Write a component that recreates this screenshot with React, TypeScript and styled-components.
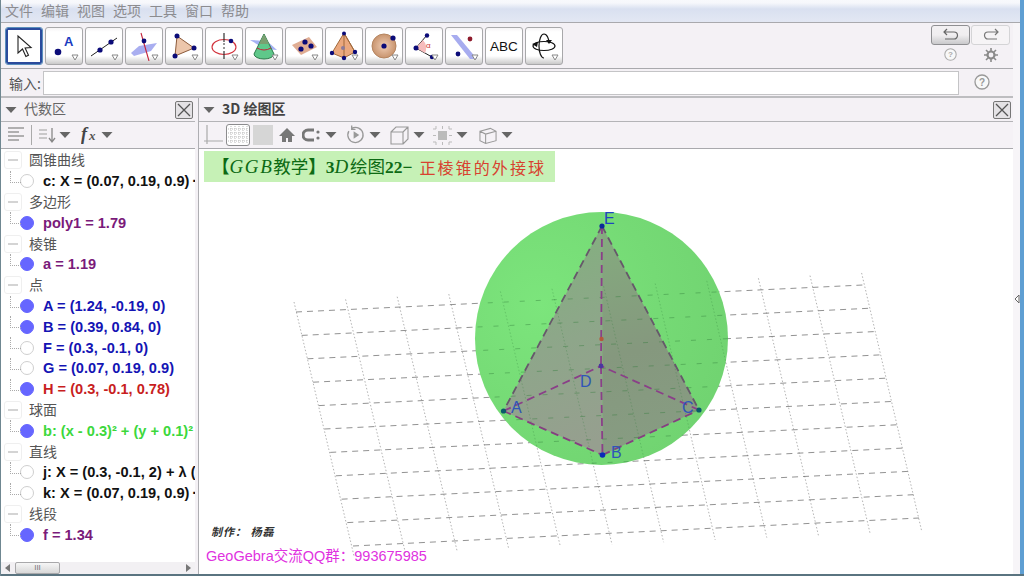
import React from 'react';
import styled, { createGlobalStyle } from 'styled-components';

const Global = createGlobalStyle`
  html, body { margin: 0; padding: 0; overflow: hidden; background: #fff; }
  * { box-sizing: border-box; }
  #root { width: 1024px; height: 576px; }
`;
const SANS = `"Liberation Sans", "Noto Sans CJK SC", sans-serif`;
const CJK = `"Noto Sans CJK SC", "Liberation Sans", sans-serif`;

const Shell = styled.div`
  width: 1024px; height: 576px; display: flex; flex-direction: column; background: #f4f1f5;
  font-family: ${SANS}; border-left: 1px solid #6f8791; overflow: hidden;
`;
const Top = styled.div`flex: 1; min-height: 0; display: flex;`;
const Main = styled.div`flex: 1; min-width: 0; display: flex; flex-direction: column;`;
const BottomEdge = styled.div`height: 2px; background: #5a7480; flex: none;`;
const BlueEdge = styled.div`width: 4px; flex: none; background: #5f9fd3;`;
const MenuBar = styled.div`
  height: 23px; flex: none; display: flex; gap: 8px; padding: 0 0 2px 4px; align-items: center;
  background: linear-gradient(#f8f9fc 0, #f6f7fb 3px, #d9e0f0 9px, #e2e7f3 21px);
  border-bottom: 1px solid #a9a9ad;
  font: 14px/20px ${CJK}; color: #8c8c90;
`;
const MenuItem = styled.span`width: 28px; white-space: nowrap;`;
const Work = styled.div`flex: 1; min-height: 0; display: flex;`;
const Content = styled.div`width: 1013px; flex: none; margin-right: -1px; display: flex; flex-direction: column; border-right: 1px solid #aeaeb2;`;
const SideStrip = styled.div`flex: 1; display: flex; align-items: center; justify-content: center; background: #f7f5f8;`;
const Toolbar = styled.div`
  height: 46px; flex: none; display: flex; align-items: flex-start; padding: 4px 0 0 4px; gap: 2px;
  border-bottom: 1px solid #a9a9ad; position: relative;
`;
const ToolBtn = styled.div<{ $active?: boolean }>`
  width: 38px; height: 38px; flex: none; border-radius: 3px; position: relative;
  border: 1px solid ${p => (p.$active ? '#5a8fbd' : '#a8a8aa')};
  background: ${p => (p.$active ? '#fff' : 'linear-gradient(#f6f4f6 0, #ffffff 4px, #ffffff 28px, #c9c9c9 36px)')};
  display: flex; align-items: center; justify-content: center;
  ${p => p.$active ? 'box-shadow: inset 0 0 0 2px #2b4b9c, inset 0 0 0 3px #ffffff;' : ''}
`;
const Corner = styled.svg`position: absolute; right: 3px; bottom: 3px;`;
const RightTools = styled.div`
  margin-left: auto; width: 79px; margin-right: 3px; margin-top: -2px;
  display: grid; grid-template-columns: 39px 39px; column-gap: 1px; row-gap: 3px; justify-items: center;
`;
const HistBtn = styled.div<{ $on?: boolean }>`
  width: 39px; height: 20px; border-radius: 3px;
  border: 1px solid ${p => (p.$on ? '#8f8f92' : '#d4d4d6')};
  background: ${p => (p.$on ? 'linear-gradient(#f2f0f2, #f0eef0 50%, #c9c9cb)' : '#f6f4f6')};
  display: flex; align-items: center; justify-content: center;
`;
const InputRow = styled.div`
  height: 29px; flex: none; display: flex; align-items: flex-start; padding: 2px 0 0 8px;
  border-bottom: 2px solid #bdbdc0; font: 14px/24px ${CJK}; color: #555;
`;
const InputLabel = styled.span`width: 34px; flex: none;`;
const InputBox = styled.div`width: 916px; height: 24px; background: #fff; border: 1px solid #c4c4c6; flex: none;`;
const HelpSlot = styled.div`flex: 1; display: flex; justify-content: center; padding: 3px 8px 0 0;`;
const Panels = styled.div`flex: 1; min-height: 0; display: flex;`;
const AlgebraPanel = styled.div`width: 194px; flex: none; display: flex; flex-direction: column;`;
const Divider = styled.div`width: 4px; flex: none; background: #f4f1f5; border-right: 1px solid #aeaeb2;`;
const GraphicsPanel = styled.div`flex: 1; min-width: 0; display: flex; flex-direction: column;`;
const TitleBar = styled.div`
  height: 24px; flex: none; display: flex; align-items: center; padding: 0 2px 0 4px;
  border-bottom: 1px solid #b4b4b7;
`;
const PanelTitle = styled.span<{ $strong?: boolean }>`
  margin: 0 0 3px 7px; font: ${p => (p.$strong ? 'bold' : 'normal')} 14px/20px ${CJK};
  color: ${p => (p.$strong ? '#444' : '#666')}; flex: 1; white-space: pre;
`;
const CloseBox = styled.div`
  width: 18px; height: 18px; flex: none; border: 1px solid #777; border-radius: 2px; background: #e4e2e5;
  display: flex; align-items: center; justify-content: center;
`;
const SubBar = styled.div`
  height: 27px; flex: none; display: flex; align-items: center; padding-left: 5px;
  border-bottom: 1px solid #a9a9ad; background: #f5f2f6;
`;
const Slot = styled.div<{ $w: number; $gap?: number; $pressed?: boolean }>`
  width: ${p => p.$w}px; height: 22px; flex: none; margin-right: ${p => p.$gap ?? 0}px;
  display: flex; align-items: center; justify-content: center;
  ${p => p.$pressed ? 'border: 1px solid #8c8c8e; border-radius: 3px; background: #fff;' : ''}
`;
const Sep = styled.div`width: 1px; height: 20px; background: #aaa; margin: 0 5px; flex: none;`;
const List = styled.div`flex: 1; min-height: 0; background: #fff; padding-top: 1px; overflow: hidden;`;
const GroupRow = styled.div`
  height: 20.8px; display: flex; align-items: center; padding-left: 3px; white-space: nowrap;
  font: 14px/20px ${CJK}; color: #555;
`;
const GroupText = styled.span`margin-top: -2px; margin-left: -1px;`;
const Minus = styled.div`
  width: 18px; height: 18px; border: 1px solid #efefef; border-radius: 3px; margin-right: 8px; flex: none;
  display: flex; align-items: center; justify-content: center;
  &::before { content: ''; width: 10px; height: 2px; background: #d4d4d4; }
`;
const ItemRow = styled.div`
  height: 20.8px; display: flex; align-items: center; white-space: nowrap; position: relative; padding-left: 19px;
  &::before { content: ''; position: absolute; left: 9px; top: 0; width: 10px; height: 11px;
    border-left: 1px dotted #aaa; border-bottom: 1px dotted #aaa; }
`;
const Marble = styled.div<{ $on?: boolean }>`
  width: 14px; height: 14px; border-radius: 50%; flex: none; margin-right: 9px;
  background: ${p => (p.$on ? '#6666ff' : '#fff')};
  border: 1px solid ${p => (p.$on ? '#6666ff' : '#cfcfcf')};
`;
const ItemText = styled.span<{ $c: string }>`font: bold 14.6px/18px ${SANS}; color: ${p => p.$c};`;
const ScrollBar = styled.div`
  height: 12px; flex: none; background: #f2f0f3; display: flex; align-items: center; padding: 0 4px; justify-content: space-between;
  position: relative;
`;
const Thumb = styled.div`
  position: absolute; left: 14px; top: 0; width: 45px; height: 12px; border: 1px solid #a8a8aa; border-radius: 2px;
  background: linear-gradient(#f6f6f6, #d8d8d8);
  display: flex; align-items: center; justify-content: center; font: 8px/10px ${SANS}; color: #777;
`;
const Canvas = styled.div`flex: 1; min-height: 0; position: relative; background: #fff; overflow: hidden;`;
const Scene = styled.svg`position: absolute; left: 0; top: 0;`;
const Banner = styled.div`
  position: absolute; left: 5px; top: 2px; width: 351px; height: 31px; background: #c6f1b6;
  display: flex; align-items: center; padding-left: 8px; white-space: nowrap;
  font: 17.5px/22px "Liberation Serif", ${CJK}; color: #0d6a14;
`;
const Ggb = styled.span`font-style: italic; font-size: 19px; letter-spacing: 1.6px;`;
const BoldSpan = styled.span`font-weight: bold;`;
const RedPart = styled.span`color: #d8412f; font-family: ${CJK}; font-size: 16px; line-height: 20px; letter-spacing: 2.1px; margin-left: 7px;`;
const Author = styled.div`
  position: absolute; left: 12px; top: 374px; font: italic bold 11px/16px ${CJK}; color: #333; letter-spacing: 1px; white-space: pre;
`;
const QQ = styled.div`
  position: absolute; left: 7px; top: 398px; font: 14.5px/18px ${SANS}; color: #df32df; white-space: nowrap;
`;

const Navy = '#0b0b78';
const Tri = () => <svg width="12" height="8" viewBox="0 0 12 8"><path d="M0.5 1h11L6 7z" fill="#666" /></svg>;

const Drop = () => (
  <Corner width="8" height="7" viewBox="0 0 8 7"><path d="M1 1h6L4 6z" fill="#fff" stroke="#888" /></Corner>
);
const S: React.FC<{ children: React.ReactNode }> = ({ children }) => (
  <svg width="30" height="30" viewBox="0 0 30 30">{children}</svg>
);
const tools: React.ReactNode[] = [
  <S><path d="M9 5v17l4.500-4 3.400 7.500 2.600-1.200-3.400-7.300 6-.5z" fill="#fff" stroke="#222" strokeWidth="1.1" /></S>,
  <S><circle cx="9" cy="21" r="3.300" fill={Navy} /><text x="15" y="15" fontFamily="Liberation Sans" fontWeight="bold" fontSize="13" fill="#1a3bc0">A</text></S>,
  <S><path d="M2 25L28 7" stroke="#222" strokeWidth="1" /><circle cx="11" cy="19" r="2.600" fill={Navy} /><circle cx="22" cy="11" r="2.600" fill={Navy} /></S>,
  <S><path d="M2 22L10 15 28 12 22 20 5 25z" fill="#a9aef0" /><path d="M12 2L20 30" stroke="#c3223a" strokeWidth="1.1" /><circle cx="15" cy="10" r="2.400" fill={Navy} /></S>,
  <S><path d="M8 5L25 17 6 25z" fill="#ecc6ab" stroke="#8c5a3a" strokeWidth="1" /><circle cx="8" cy="5" r="2.500" fill={Navy} /><circle cx="25" cy="17" r="2.500" fill={Navy} /><circle cx="6" cy="25" r="2.500" fill={Navy} /></S>,
  <S><ellipse cx="15" cy="16" rx="12" ry="7.500" fill="none" stroke="#d2323c" strokeWidth="1.1" /><path d="M15 2v9M15 20v8" stroke="#333" strokeWidth="1.2" /><path d="M15 12v7" stroke="#333" strokeDasharray="2 2" /><circle cx="22" cy="10" r="2.300" fill={Navy} /></S>,
  <S><path d="M1 9l17 1 10 9-12-1z" fill="#8f9df0" opacity=".8" /><path d="M15 3L5 23a10 5 0 0 0 20 0z" fill="#5fc88a" stroke="#2a7a4a" /><path d="M8 17q7 4 14 0" stroke="#c3223a" fill="none" /><path d="M15 3l-5 10h10z" fill="#7aa070" /></S>,
  <S><path d="M3 14L20 6 28 16 12 24z" fill="#e0ad93" /><circle cx="16" cy="11" r="2.600" fill={Navy} /><circle cx="22" cy="15" r="2.600" fill={Navy} /><circle cx="12" cy="18" r="2.600" fill={Navy} /></S>,
  <S><path d="M15 2L3 22l12 5 11-6z" fill="#eaa87e" stroke="#a0683a" /><path d="M15 2v25M15 2L26 21" stroke="#a0683a" /><circle cx="14" cy="17" r="2" fill="#8a7a9a" /><circle cx="15" cy="2.500" r="2" fill={Navy} /><circle cx="3" cy="22" r="2.200" fill={Navy} /><circle cx="15" cy="27" r="2.200" fill={Navy} /><circle cx="26" cy="21" r="2.200" fill={Navy} /></S>,
  <S><defs><radialGradient id="sph"><stop offset="0" stopColor="#f0cdb4" /><stop offset="1" stopColor="#c8946e" /></radialGradient></defs><circle cx="15" cy="15" r="12" fill="url(#sph)" stroke="#b58560" /><circle cx="15" cy="15" r="2.600" fill={Navy} /><circle cx="24" cy="7" r="2.600" fill={Navy} /></S>,
  <S><path d="M7 17L18 4M7 17l16 9" stroke="#222" /><path d="M7 17l7-8a12 12 0 0 1 2 13z" fill="#f7bcbc" /><circle cx="7" cy="17" r="2.500" fill={Navy} /><circle cx="18" cy="4.500" r="2.200" fill={Navy} /><circle cx="23" cy="26" r="2.200" fill={Navy} /><text x="17" y="17" fontFamily="Liberation Sans" fontSize="8" fill="#c33">α</text></S>,
  <S><path d="M2 4h6l20 24-7 0z" fill="#a7acef" /><circle cx="21" cy="8" r="2.400" fill="#8e1b2c" /><circle cx="9" cy="23" r="2.400" fill={Navy} /></S>,
  <S><text x="15" y="20" textAnchor="middle" fontFamily="Liberation Sans" fontSize="13.5" fill="#111">ABC</text></S>,
  <S><ellipse cx="15" cy="15" rx="11" ry="4.500" fill="none" stroke="#111" strokeWidth="1.2" /><path d="M15 27c-3 0-5-6-5-12s2-12 5-12 5 5 5 9" fill="none" stroke="#111" strokeWidth="1.2" /><path d="M17 9l3 4 3-4zM3 13l6-2-1 5z" fill="#111" /></S>,
];

const CloseIcon = () => <svg width="16" height="16" viewBox="0 0 16 16"><path d="M2 2l12 12M14 2L2 14" stroke="#555" strokeWidth="1.3" /></svg>;
const Help = ({ size, c }: { size: number; c: string }) => (
  <svg width={size} height={size} viewBox="0 0 16 16">
    <circle cx="8" cy="8" r="7" fill="#f8f8f8" stroke={c} strokeWidth="1.3" />
    <text x="8" y="11.500" textAnchor="middle" fontFamily="Liberation Sans" fontSize="10" fontWeight="bold" fill={c}>?</text>
  </svg>
);

type Item = { t: string; c: string; on?: boolean };
const BLACK = '#111', PUR = '#7a1a7a', BLUE = '#1414b4', RED = '#c81e1e', GRN = '#3cd83c';
const tree: { g: string; items: Item[] }[] = [
  { g: '圆锥曲线', items: [{ t: 'c: X = (0.07, 0.19, 0.9)\u2009·', c: BLACK }] },
  { g: '多边形', items: [{ t: 'poly1 = 1.79', c: PUR, on: true }] },
  { g: '棱锥', items: [{ t: 'a = 1.19', c: PUR, on: true }] },
  { g: '点', items: [
    { t: 'A = (1.24, -0.19, 0)', c: BLUE, on: true },
    { t: 'B = (0.39, 0.84, 0)', c: BLUE, on: true },
    { t: 'F = (0.3, -0.1, 0)', c: BLUE },
    { t: 'G = (0.07, 0.19, 0.9)', c: BLUE },
    { t: 'H = (0.3, -0.1, 0.78)', c: RED, on: true },
  ] },
  { g: '球面', items: [{ t: 'b: (x - 0.3)² + (y + 0.1)²', c: GRN, on: true }] },
  { g: '直线', items: [
    { t: 'j: X = (0.3, -0.1, 2) + λ (', c: BLACK },
    { t: 'k: X = (0.07, 0.19, 0.9)\u2009·', c: BLACK },
  ] },
  { g: '线段', items: [{ t: 'f = 1.34', c: PUR, on: true }] },
];

// grid, in canvas coordinates (canvas origin is page 199,149)
const OX = 199, OY = 149;
const hLines = Array.from({ length: 11 }, (_, i) => ({
  x1: 296 + i * 5.7 - OX, y1: 312 + i * 23.4 - OY,
  x2: 863 + i * 5.6 - OX, y2: 285 + i * 23.3 - OY,
}));
const vLines = Array.from({ length: 12 }, (_, j) => ({
  x1: 294 + j * 51.6 - OX, y1: 302 - j * 2.64 - OY,
  x2: 354 + j * 51.6 - OX, y2: 556 - j * 2.3 - OY,
}));
const P = (x: number, y: number) => `${x - OX},${y - OY}`;
const pt = { E: [602, 226], A: [503.5, 411], B: [602.5, 455], C: [699, 410], D: [601, 366], H: [601.5, 339] } as Record<string, [number, number]>;
const L = (a: string, b: string) => ({ x1: pt[a][0] - OX, y1: pt[a][1] - OY, x2: pt[b][0] - OX, y2: pt[b][1] - OY });

const GridH = ({ stroke, op, dash }: { stroke: string; op: number; dash: string }) => (
  <g stroke={stroke} fill="none">
    {hLines.map((l, i) => <line key={i} {...l} strokeWidth="1" strokeDasharray={dash} strokeOpacity={op} />)}
    {vLines.map((l, i) => <line key={i} {...l} strokeWidth="1" strokeDasharray="1.5 2" strokeOpacity={op * 0.7} />)}
  </g>
);

const Label = styled.text`font: 16px ${SANS}; fill: #2f55b8;`;

const DrawScene = () => (
  <Scene width="814" height="425" viewBox="0 0 814 425">
    <defs>
      <radialGradient id="ball" gradientUnits="userSpaceOnUse" cx={540 - OX} cy={305 - OY} r="215">
        <stop offset="0" stopColor="#7ce57c" />
        <stop offset=".55" stopColor="#75da75" />
        <stop offset="1" stopColor="#70d270" />
      </radialGradient>
      <linearGradient id="faceL" gradientUnits="userSpaceOnUse" x1={520 - OX} y1={250 - OY} x2={600 - OX} y2={440 - OY}>
        <stop offset="0" stopColor="#83b07f" />
        <stop offset=".5" stopColor="#8ea68a" />
        <stop offset="1" stopColor="#969f8f" />
      </linearGradient>
      <linearGradient id="faceR" gradientUnits="userSpaceOnUse" x1={610 - OX} y1={240 - OY} x2={660 - OX} y2={440 - OY}>
        <stop offset="0" stopColor="#84aa7e" />
        <stop offset=".55" stopColor="#85987e" />
        <stop offset="1" stopColor="#879c82" />
      </linearGradient>
      <clipPath id="ballClip"><circle cx={601.5 - OX} cy={338.5 - OY} r="126.5" /></clipPath>
    </defs>
    <GridH stroke="#777" op={0.8} dash="6 5" />
    <circle cx={601.5 - OX} cy={338.5 - OY} r="126.5" fill="url(#ball)" />
    <polygon points={`${P(...pt.E)} ${P(...pt.A)} ${P(...pt.B)}`} fill="url(#faceL)" />
    <polygon points={`${P(...pt.E)} ${P(...pt.B)} ${P(...pt.C)}`} fill="url(#faceR)" />
    <g clipPath="url(#ballClip)"><GridH stroke="#2f7a3a" op={0.4} dash="5 11" /></g>
    <g fill="none" strokeWidth="1.8" strokeDasharray="8 5">
      <line {...L('E', 'A')} stroke="#66586a" />
      <line {...L('E', 'C')} stroke="#66586a" />
      <line {...L('A', 'B')} stroke="#853f80" />
      <line {...L('B', 'C')} stroke="#853f80" />
      <line {...L('A', 'D')} stroke="#8a3f88" />
      <line {...L('C', 'D')} stroke="#8a3f88" />
      <line {...L('E', 'D')} stroke="#8a3f88" />
      <line {...L('D', 'B')} stroke="#8a3f88" />
    </g>
    <circle cx={pt.E[0] - OX} cy={pt.E[1] - OY} r="2.6" fill="#0b2a9a" />
    <circle cx={pt.A[0] - OX} cy={pt.A[1] - OY} r="2.6" fill="#0a5a6a" />
    <circle cx={pt.C[0] - OX} cy={pt.C[1] - OY} r="2.6" fill="#0a5a6a" />
    <circle cx={pt.B[0] - OX} cy={pt.B[1] - OY} r="2.8" fill="#0b2ab8" />
    <circle cx={pt.D[0] - OX} cy={pt.D[1] - OY} r="2.4" fill="#4a35a0" />
    <circle cx={pt.H[0] - OX} cy={pt.H[1] - OY} r="2.2" fill="#b5583a" />
    <Label x={604 - OX} y={224 - OY} style={{ fill: '#1f45c0' }}>E</Label>
    <Label x={511 - OX} y={413 - OY}>A</Label>
    <Label x={580 - OX} y={387 - OY}>D</Label>
    <Label x={682 - OX} y={413 - OY}>C</Label>
    <Label x={611 - OX} y={458 - OY}>B</Label>
  </Scene>
);

export default function App() {
  return (
    <>
      <Global />
      <Shell>
        <Top>
          <Main>
            <MenuBar>
              {['文件', '编辑', '视图', '选项', '工具', '窗口', '帮助'].map(m => <MenuItem key={m}>{m}</MenuItem>)}
            </MenuBar>
            <Work>
              <Content>
                <Toolbar>
                  {tools.map((t, i) => (
                    <ToolBtn key={i} $active={i === 0}>{t}{i > 0 && i !== 12 && <Drop />}</ToolBtn>
                  ))}
                  <RightTools>
                    <HistBtn $on><svg width="18" height="14" viewBox="0 0 18 14"><path d="M2 4h10a3.500 3.500 0 0 1 0 7H3M5 1L2 4l3 3" fill="none" stroke="#666" strokeWidth="1.2" /></svg></HistBtn>
                    <HistBtn><svg width="18" height="14" viewBox="0 0 18 14"><path d="M16 4H6a3.500 3.500 0 0 0 0 7h9M13 1l3 3-3 3" fill="none" stroke="#777" strokeWidth="1.2" /></svg></HistBtn>
                    <Help size={13} c="#aaa" />
                    <svg width="14" height="14" viewBox="0 0 14 14"><circle cx="7" cy="7" r="3.500" fill="none" stroke="#8a8a8a" strokeWidth="2.2" /><path d="M7 0v3M7 11v3M0 7h3M11 7h3M2 2l2 2M10 10l2 2M2 12l2-2M10 4l2-2" stroke="#8a8a8a" strokeWidth="1.6" /></svg>
                  </RightTools>
                </Toolbar>
                <InputRow>
                  <InputLabel>输入:</InputLabel>
                  <InputBox />
                  <HelpSlot><Help size={16} c="#999" /></HelpSlot>
                </InputRow>
                <Panels>
                  <AlgebraPanel>
                    <TitleBar>
                      <Tri />
                      <PanelTitle>代数区</PanelTitle>
                      <CloseBox><CloseIcon /></CloseBox>
                    </TitleBar>
                    <SubBar>
                      <Slot $w={20}><svg width="18" height="18" viewBox="0 0 18 18"><path d="M1 2h16M1 6h11M1 10h16M1 14h11" stroke="#999" strokeWidth="1.4" /></svg></Slot>
                      <Sep />
                      <Slot $w={21}><svg width="20" height="18" viewBox="0 0 20 18"><path d="M1 4h8M1 8h8M1 12h8" stroke="#bbb" strokeWidth="1.3" /><path d="M14 2v13M11 12l3 4 3-4" fill="none" stroke="#888" strokeWidth="1.3" /></svg></Slot>
                      <Slot $w={13} $gap={10}><Tri /></Slot>
                      <Slot $w={19}><svg width="19" height="22" viewBox="0 0 19 22"><text x="0" y="16" fontFamily="Liberation Serif" fontStyle="italic" fontWeight="bold" fontSize="18" fill="#444">f</text><text x="8" y="16" fontFamily="Liberation Serif" fontStyle="italic" fontWeight="bold" fontSize="13" fill="#555">x</text></svg></Slot>
                      <Slot $w={14}><Tri /></Slot>
                    </SubBar>
                    <List>
                      {tree.map(g => (
                        <React.Fragment key={g.g}>
                          <GroupRow><Minus /><GroupText>{g.g}</GroupText></GroupRow>
                          {g.items.map(it => (
                            <ItemRow key={it.t}><Marble $on={it.on} /><ItemText $c={it.c}>{it.t}</ItemText></ItemRow>
                          ))}
                        </React.Fragment>
                      ))}
                    </List>
                    <ScrollBar>
                      <svg width="6" height="8" viewBox="0 0 6 8"><path d="M5 0v8L0 4z" fill="#777" /></svg>
                      <Thumb>III</Thumb>
                      <svg width="6" height="8" viewBox="0 0 6 8"><path d="M1 0v8l5-4z" fill="#777" /></svg>
                    </ScrollBar>
                  </AlgebraPanel>
                  <Divider />
                  <GraphicsPanel>
                    <TitleBar>
                      <Tri />
                      <PanelTitle $strong>3D 绘图区</PanelTitle>
                      <CloseBox><CloseIcon /></CloseBox>
                    </TitleBar>
                    <SubBar>
                      <Slot $w={19} $gap={3}><svg width="19" height="20" viewBox="0 0 19 20"><path d="M3 0v19M0 16h19" stroke="#aaa" strokeWidth="1.2" /></svg></Slot>
                      <Slot $w={24} $gap={3} $pressed><svg width="20" height="18" viewBox="0 0 20 18"><path d="M0 3h20M0 7h20M0 11h20M0 15h20M3 0v18M7 0v18M11 0v18M15 0v18M19 0v18" stroke="#bbb" strokeWidth="1" strokeDasharray="1 1" /></svg></Slot>
                      <Slot $w={20} $gap={5}><svg width="20" height="20" viewBox="0 0 20 20"><rect width="20" height="20" fill="#d6d6d6" /></svg></Slot>
                      <Slot $w={18} $gap={6}><svg width="18" height="18" viewBox="0 0 18 18"><path d="M9 2L1 10h3v6h4v-4h2v4h4v-6h3z" fill="#777" /></svg></Slot>
                      <Slot $w={18} $gap={5}><svg width="18" height="16" viewBox="0 0 18 16"><path d="M12 3H6a5 5 0 0 0 0 10h6" fill="none" stroke="#777" strokeWidth="3" /><circle cx="16" cy="5" r="1.6" fill="#777" /><circle cx="16" cy="11" r="1.6" fill="#777" /></svg></Slot>
                      <Slot $w={12} $gap={9}><Tri /></Slot>
                      <Slot $w={19} $gap={4}><svg width="20" height="20" viewBox="0 0 20 20"><path d="M6 3A8 8 0 1 1 3 6M6 0v4h4" fill="none" stroke="#999" strokeWidth="1.4" /><path d="M8 6l6 4-6 4z" fill="#999" /></svg></Slot>
                      <Slot $w={12} $gap={9}><Tri /></Slot>
                      <Slot $w={19} $gap={3}><svg width="19" height="19" viewBox="0 0 19 19"><path d="M1 6h12v12H1zM1 6l5-5h12v12l-5 5M13 6l5-5" fill="none" stroke="#999" strokeWidth="1.1" /></svg></Slot>
                      <Slot $w={13} $gap={8}><Tri /></Slot>
                      <Slot $w={19} $gap={4}><svg width="19" height="19" viewBox="0 0 19 19"><rect x="5" y="5" width="9" height="9" fill="#bbb" /><path d="M3 0v3H0M16 0v3h3M3 19v-3H0M16 19v-3h3M9.5 0v3M9.5 16v3M0 9.5h3M16 9.5h3" fill="none" stroke="#bbb" /></svg></Slot>
                      <Slot $w={12} $gap={11}><Tri /></Slot>
                      <Slot $w={18} $gap={3}><svg width="19" height="19" viewBox="0 0 19 19"><path d="M1 5l11-3 6 3v10l-11 3-6-3zM1 5l6 3 11-3M7 8v10" fill="none" stroke="#999" strokeWidth="1.1" /></svg></Slot>
                      <Slot $w={13}><Tri /></Slot>
                    </SubBar>
                    <Canvas>
                      <DrawScene />
                      <Banner>
                        <BoldSpan>【</BoldSpan><Ggb>GGB</Ggb>教学<BoldSpan>】3</BoldSpan><Ggb>D</Ggb>绘图<BoldSpan>22−</BoldSpan>
                        <RedPart>正棱锥的外接球</RedPart>
                      </Banner>
                      <Author>制作： 杨磊</Author>
                      <QQ>GeoGebra交流QQ群：993675985</QQ>
                    </Canvas>
                  </GraphicsPanel>
                </Panels>
              </Content>
              <SideStrip>
                <svg width="6" height="10" viewBox="0 0 6 10"><path d="M5 1v8L1 5z" fill="#fff" stroke="#666" /></svg>
              </SideStrip>
            </Work>
          </Main>
          <BlueEdge />
        </Top>
        <BottomEdge />
      </Shell>
    </>
  );
}
